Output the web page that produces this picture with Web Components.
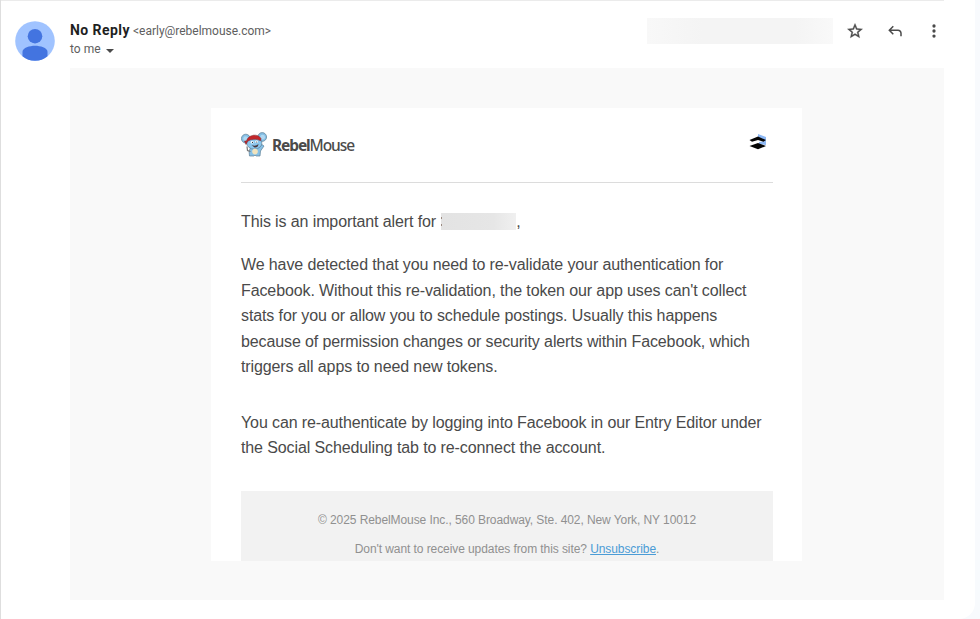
<!DOCTYPE html>
<html lang="en">
<head>
<meta charset="utf-8">
<title>No Reply</title>
<style>
  body {
    margin: 0;
    background: #f8fafd;
    font-family: "Liberation Sans", Arial, sans-serif;
  }
</style>
</head>
<body>
<mail-message>
  <mail-header slot="header" name="No Reply" email="early@rebelmouse.com" recipient="me"></mail-header>
  <alert-letter>
    <p>This is an important alert for <redacted-text></redacted-text>,</p>
    <p>We have detected that you need to re-validate your authentication for<br>
      Facebook. Without this re-validation, the token our app uses can't collect<br>
      stats for you or allow you to schedule postings. Usually this happens<br>
      because of permission changes or security alerts within Facebook, which<br>
      triggers all apps to need new tokens.</p>
    <p>You can re-authenticate by logging into Facebook in our Entry Editor under<br>
      the Social Scheduling tab to re-connect the account.</p>
    <letter-footer slot="footer"></letter-footer>
  </alert-letter>
</mail-message>

<script>
class MailMessage extends HTMLElement {
  constructor() {
    super();
    this.attachShadow({ mode: "open" });
  }

  connectedCallback() {
    this.shadowRoot.innerHTML = `
      <style>
        :host {
          display: block;
          box-sizing: border-box;
          width: 975px;
          height: 619px;
          overflow: hidden;
          border-left: 1px solid #dedede;
          border-radius: 0 0 16px 0;
          background: #fff;
        }

        .line {
          width: 943px;
          height: 1px;
          background: #ebebeb;
        }

        .body {
          box-sizing: border-box;
          width: 874px;
          height: 532px;
          margin-left: 69px;
          padding: 40px 0 0 141px;
          background: #f9f9f9;
        }
      </style>
      <div class="line"></div>
      <slot name="header"></slot>
      <div class="body"><slot></slot></div>
    `;
  }
}

class MailHeader extends HTMLElement {
  constructor() {
    super();
    this.attachShadow({ mode: "open" });
  }

  connectedCallback() {
    const name = this.getAttribute("name") || "";
    const email = this.getAttribute("email") || "";
    const recipient = this.getAttribute("recipient") || "";

    this.shadowRoot.innerHTML = `
      <style>
        :host {
          display: flex;
          box-sizing: border-box;
          width: 943px;
          height: 67px;
          padding-left: 14px;
          font-family: Roboto, Arial, sans-serif;
          color: #5e5e5e;
        }

        .avatar {
          flex: none;
          width: 40px;
          height: 40px;
          margin-top: 20px;
        }

        .who {
          flex: 1;
          margin: 20px 0 0 15px;
          white-space: nowrap;
        }

        .from,
        .to {
          display: flex;
          align-items: baseline;
          height: 19px;
          line-height: 19px;
        }

        .name {
          margin-right: 3px;
          font-size: 14px;
          font-weight: 700;
          letter-spacing: 0.45px;
          color: #1f1f1f;
        }

        .email,
        .to {
          font-size: 12px;
        }

        .email {
          letter-spacing: -0.02px;
        }

        .to {
          align-items: center;
        }

        .to svg {
          margin: 2px 0 0 5px;
        }

        .date {
          width: 186px;
          height: 26px;
          margin-top: 17px;
          background: linear-gradient(90deg, #f8f8f8, #f4f4f4 30%, #f4f4f4 80%, #f9f9f9);
        }

        .actions {
          display: flex;
          gap: 21.5px;
          margin: 21px 1px 0 13px;
          fill: #4a4a4a;
        }

        .actions svg {
          width: 18px;
          height: 18px;
        }
      </style>

      <svg class="avatar" viewBox="0 0 40 40">
        <circle cx="20" cy="20" r="19.8" fill="#a0c3ff"/>
        <circle cx="20" cy="15.2" r="7.3" fill="#4374e0"/>
        <path fill="#4374e0" d="M7.5 30.7c0-3.8 7.3-5.9 12.5-5.9s12.5 2.1 12.5 5.9v4.5A19.8 19.8 0 0 1 20 39.800 19.8 19.8 0 0 1 7.500 35.200z"/>
      </svg>
      <div class="who">
        <div class="from">
          <span class="name">${name}</span>
          <span class="email">&lt;${email}&gt;</span>
        </div>
        <div class="to">
          to ${recipient}
          <svg width="8" height="4" viewBox="0 0 8 4"><path fill="#4a4a4a" d="M0 0h8L4 4z"/></svg>
        </div>
      </div>
      <div class="date"></div>
      <div class="actions">
        <svg viewBox="0 0 24 24"><path stroke="#4a4a4a" stroke-width=".5" d="M22 9.24l-7.19-.62L12 2 9.19 8.63 2 9.24l5.46 4.73L5.82 21 12 17.27 18.18 21l-1.63-7.03zM12 15.4l-3.76 2.27 1-4.28-3.32-2.88 4.38-.38L12 6.1l1.71 4.04 4.38.38-3.32 2.88 1 4.28z"/></svg>
        <svg viewBox="0 0 24 24"><path d="M19 19v-4q0-1.25-.875-2.125T16 12H6.825l3.6 3.6L9 17l-6-6 6-6 1.425 1.4-3.6 3.6H16q2.075 0 3.538 1.463T21 15v4z"/></svg>
        <svg viewBox="0 0 24 24"><circle cx="12" cy="5.3" r="2.2"/><circle cx="12" cy="12" r="2.2"/><circle cx="12" cy="18.7" r="2.2"/></svg>
      </div>
    `;
  }
}

class AlertLetter extends HTMLElement {
  constructor() {
    super();
    this.attachShadow({ mode: "open" });
  }

  connectedCallback() {
    this.shadowRoot.innerHTML = `
      <style>
        :host {
          display: flex;
          flex-direction: column;
          box-sizing: border-box;
          width: 591px;
          height: 453px;
          padding: 0 29px 0 30px;
          background: #fff;
          color: #4a4a4a;
          font-size: 16px;
          line-height: 25.6px;
          letter-spacing: -0.11px;
          white-space: nowrap;
        }

        header {
          display: flex;
          justify-content: space-between;
          align-items: flex-start;
          box-sizing: border-box;
          height: 75px;
          padding: 24px 6px 0 0;
          border-bottom: 1px solid #dcdcdc;
        }

        main {
          flex: 1;
          padding-top: 26px;
        }

        ::slotted(p) {
          margin: 0 0 17.5px;
        }

        ::slotted(p:nth-of-type(2)) {
          margin-bottom: 29.5px;
        }
      </style>
      <header>
        <rebel-logo></rebel-logo>
        <stack-icon></stack-icon>
      </header>
      <main><slot></slot></main>
      <slot name="footer"></slot>
    `;
  }
}

class RebelLogo extends HTMLElement {
  constructor() {
    super();
    this.attachShadow({ mode: "open" });
  }

  connectedCallback() {
    this.shadowRoot.innerHTML = `
      <style>
        :host {
          display: flex;
          align-items: center;
          gap: 5px;
          height: 26px;
          font: 500 15.5px/26px "Noto Sans", sans-serif;
          letter-spacing: -1.1px;
          color: #4b4b4b;
        }

        b {
          font-weight: 700;
        }
      </style>
      <svg width="26" height="26" viewBox="0 0 26 26">
        <g stroke="#5f7f95" stroke-width=".7">
          <path fill="#86c0e6" d="M10 15l-2 4 .5 5H13l1-1 1 1h4l.5-5 3.500-5-2-1.500-4 3z"/>
          <circle cx="4.8" cy="6.6" r="4.4" fill="#86bfe5"/>
          <circle cx="21.2" cy="5" r="4.4" fill="#86bfe5"/>
          <ellipse cx="13.3" cy="11" rx="7.6" ry="6.2" fill="#8bc6ec"/>
        </g>
        <circle cx="4.6" cy="6.7" r="2.4" fill="#b0d8f2"/>
        <circle cx="21.6" cy="5.2" r="2.4" fill="#b0d8f2"/>
        <path fill="#c3272b" stroke="#7b2528" stroke-width=".5" d="M5.500 9C7 2.500 17 1 20 6.500l-.5 2.300C15 6.500 10 7 6.500 9.500L5 12.500 3.500 9z"/>
        <ellipse cx="11.2" cy="10.2" rx="1.4" ry="1.3" fill="#fff"/>
        <ellipse cx="15.6" cy="9.8" rx="1.4" ry="1.3" fill="#fff"/>
        <circle cx="11.5" cy="10.4" r=".6" fill="#263743"/>
        <circle cx="15.7" cy="10" r=".6" fill="#263743"/>
        <path d="M10.500 13q4 2 7-1-.5 4-4 3.500z" fill="#493840"/>
        <ellipse cx="14" cy="19.6" rx="2.8" ry="2.8" fill="#f1e3bd"/>
        <path d="M6 14.500l.500 4 3 1" fill="none" stroke="#777" stroke-width="1.2"/>
      </svg>
      <span><b>Rebel</b>Mouse</span>
    `;
  }
}

class StackIcon extends HTMLElement {
  constructor() {
    super();
    this.attachShadow({ mode: "open" });
  }

  connectedCallback() {
    this.shadowRoot.innerHTML = `
      <style>
        :host {
          display: block;
          height: 18px;
        }

        svg {
          display: block;
        }
      </style>
      <svg width="18" height="18" viewBox="0 0 18 18">
        <path fill="#8db8f5" d="M9 2l8 3v4L9 6zM10 10l7-1v4l-7-1z"/>
        <path fill="#050505" d="M.5 8L9 4.600 17 8l-2.500 1.800L9 8 3 9.800zM.5 14L9 11l8 3-8 3.300z"/>
      </svg>
    `;
  }
}

class RedactedText extends HTMLElement {
  constructor() {
    super();
    this.attachShadow({ mode: "open" });
  }

  connectedCallback() {
    this.shadowRoot.innerHTML = `
      <style>
        :host {
          display: inline-block;
          width: 75px;
          height: 17px;
          margin-left: 1px;
          vertical-align: -3px;
          background:
            linear-gradient(#9b8a80, #9b8a80) 0 4px / 1px 2px no-repeat,
            linear-gradient(#9b8a80, #9b8a80) 0 11px / 1px 2px no-repeat,
            linear-gradient(90deg, #e3e3e3, #e6e6e6 70%, #f0f0f0);
        }
      </style>
    `;
  }
}

class LetterFooter extends HTMLElement {
  constructor() {
    super();
    this.attachShadow({ mode: "open" });
  }

  connectedCallback() {
    this.shadowRoot.innerHTML = `
      <style>
        :host {
          display: block;
          box-sizing: border-box;
          height: 70px;
          padding-top: 20px;
          background: #f2f2f2;
          color: #909090;
          font-size: 12px;
          line-height: 19px;
          letter-spacing: -0.08px;
          text-align: center;
        }

        p {
          margin: 0 0 10px;
        }

        a {
          color: #4b9cd6;
        }
      </style>
      <p>© 2025 RebelMouse Inc., 560 Broadway, Ste. 402, New York, NY 10012</p>
      <p>Don't want to receive updates from this site? <a href="#">Unsubscribe</a>.</p>
    `;
  }
}

customElements.define("mail-message", MailMessage);
customElements.define("mail-header", MailHeader);
customElements.define("alert-letter", AlertLetter);
customElements.define("rebel-logo", RebelLogo);
customElements.define("stack-icon", StackIcon);
customElements.define("redacted-text", RedactedText);
customElements.define("letter-footer", LetterFooter);
</script>
</body>
</html>
